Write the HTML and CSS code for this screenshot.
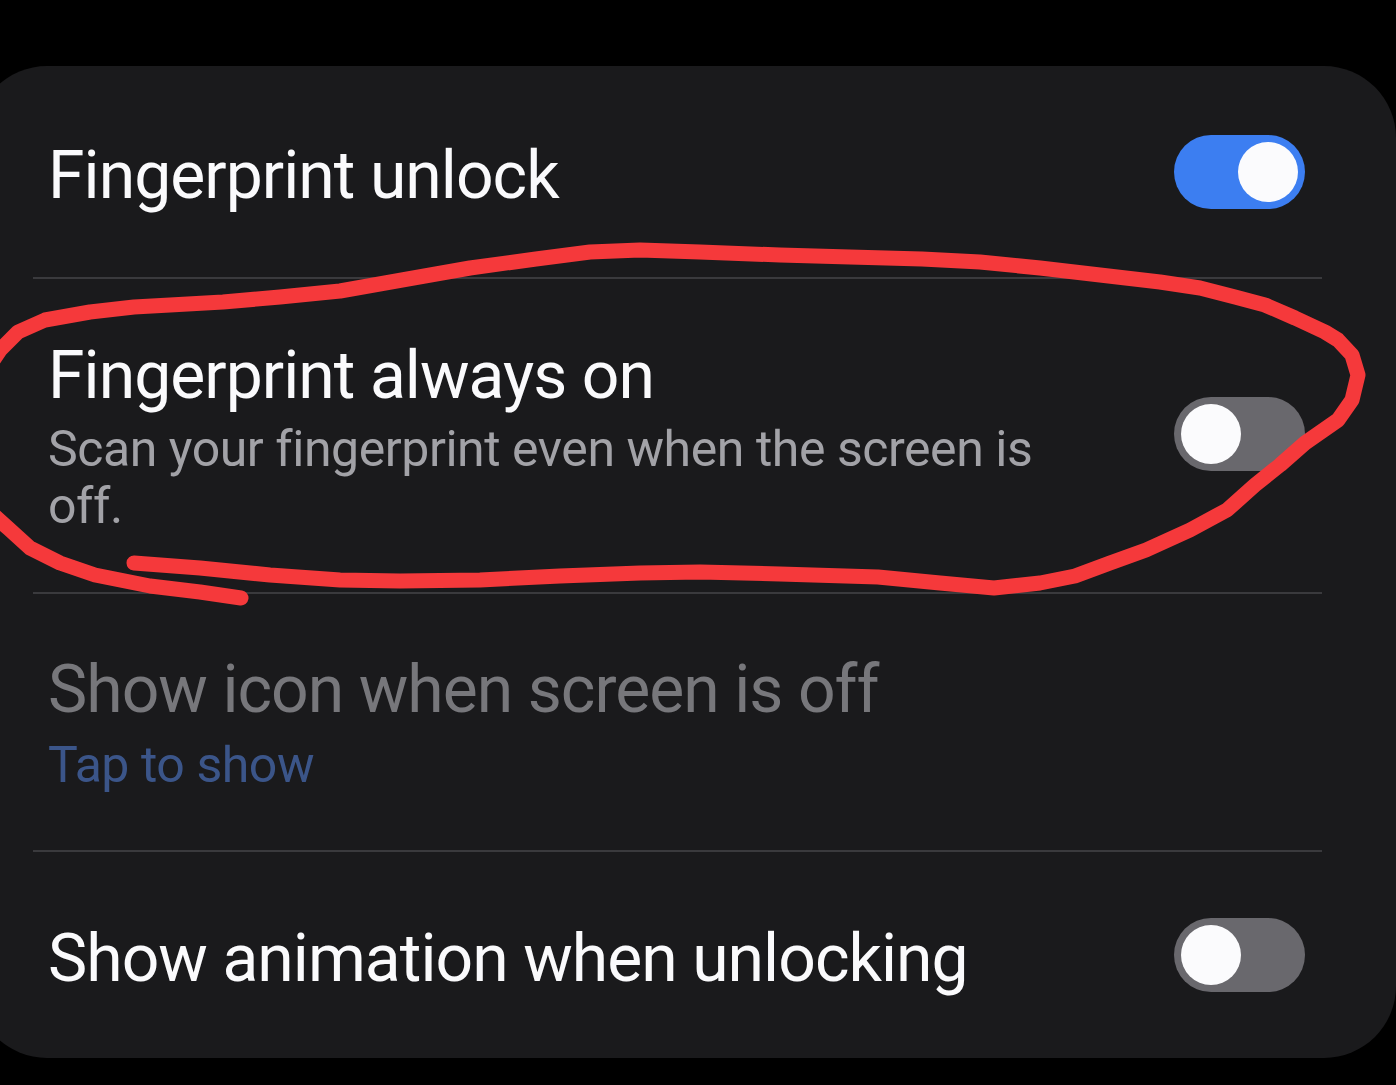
FILE: index.html
```html
<!DOCTYPE html>
<html lang="en">
<head>
    <meta charset="UTF-8">
    <meta name="viewport" content="width=device-width, initial-scale=1.0">
    <title>Fingerprint settings</title>
    <link rel="stylesheet" href="styles.css">
</head>
<body>

    <div class="card">
        <div class="row row-unlock">
            <div class="text">
                <div class="title">Fingerprint unlock</div>
            </div>
            <div class="switch on"><span class="knob"></span></div>
        </div>
        <div class="divider"></div>

        <div class="row row-always">
            <div class="text">
                <div class="title">Fingerprint always on</div>
                <div class="summary">Scan your fingerprint even when the screen is off.</div>
            </div>
            <div class="switch"><span class="knob"></span></div>
        </div>
        <div class="divider"></div>

        <div class="row row-icon">
            <div class="text">
                <div class="title disabled">Show icon when screen is off</div>
                <div class="link">Tap to show</div>
            </div>
        </div>
        <div class="divider"></div>

        <div class="row row-anim">
            <div class="text">
                <div class="title">Show animation when unlocking</div>
            </div>
            <div class="switch"><span class="knob"></span></div>
        </div>
    </div>

    <!-- red marker scribble drawn over the screenshot -->
    <svg class="scribble" width="1396" height="1085" viewBox="0 0 1396 1085">
        <path d="M134 563 L200 568 L270 575 L340 580 L400 581 L480 580 L560 576 L640 573 L700 572 L780 574 L878 577 L940 583 L994 588 L1040 583 L1075 576 L1110 563 L1146 550 L1190 530 L1227 510 L1255 485 L1280 465 L1305 443 L1338 420 L1352 400 L1358 375 L1352 355 L1338 340 L1325 332 L1295 318 L1265 305 L1235 297 L1200 288 L1160 282 L1100 275 L1040 268 L980 262 L922 259 L850 257 L780 255 L700 252 L640 250 L590 252 L536 259 L470 268 L402 280 L340 291 L280 297 L223 302 L170 305 L134 307 L90 312 L45 320 L18 332 L0 350 L-20 380 L-36 430 L-32 480 L-12 510 L8 528 L30 548 L60 563 L95 575 L150 586 L200 592 L241 598"
              fill="none" stroke="#f5393b" stroke-width="15" stroke-linecap="round" stroke-linejoin="round"/>
    </svg>

</body>
</html>
```

FILE: styles.css
```css
body {
    margin: 0;
    background-color: #000;
    font-family: Roboto, "Noto Sans", sans-serif;
    overflow: hidden;
}
.card {
    margin: 66px 0 0 -25px;
    width: 1421px;
    height: 992px;
    background-color: #1a1a1c;
    border-radius: 72px;
}
.row {
    display: flex;
    align-items: center;
    padding: 0 91px 0 73px;
}
.row-unlock { height: 211px; }
.row-always { height: 313px; }
.row-icon { height: 256px; }
.row-anim { height: 206px; }
.text {
    flex: 1;
}
.row-unlock .text,
.row-anim .text {
    margin-top: 8px; /* single line titles sit a bit low */
}
.row-always .switch {
    margin-top: -4px;
}
.title {
    font-size: 66px;
    line-height: 78px;
    letter-spacing: -0.95px;
    color: #fafafc;
}
.title.disabled {
    color: #77777b;
}
.summary {
    margin-top: 6px;
    max-width: 1010px;
    font-size: 50px;
    line-height: 57px;
    letter-spacing: -0.45px;
    color: #a2a2a7;
}
.link {
    margin-top: 8px;
    font-size: 50px;
    line-height: 57px;
    letter-spacing: -0.45px;
    color: #3b5589;
}
.divider {
    height: 2px;
    margin: 0 74px 0 58px;
    background-color: #3a3a3d;
}
.switch {
    width: 131px;
    height: 74px;
    border-radius: 37px;
    background-color: #69686d;
    padding: 7px;
    box-sizing: border-box;
    display: flex;
}
.switch.on {
    background-color: #3c7ef1;
    justify-content: flex-end;
}
.knob {
    width: 60px;
    height: 60px;
    border-radius: 50%;
    background-color: #fbfbfd;
}
.scribble {
    position: absolute;
    top: 0;
    left: 0;
    overflow: visible;
}
```
